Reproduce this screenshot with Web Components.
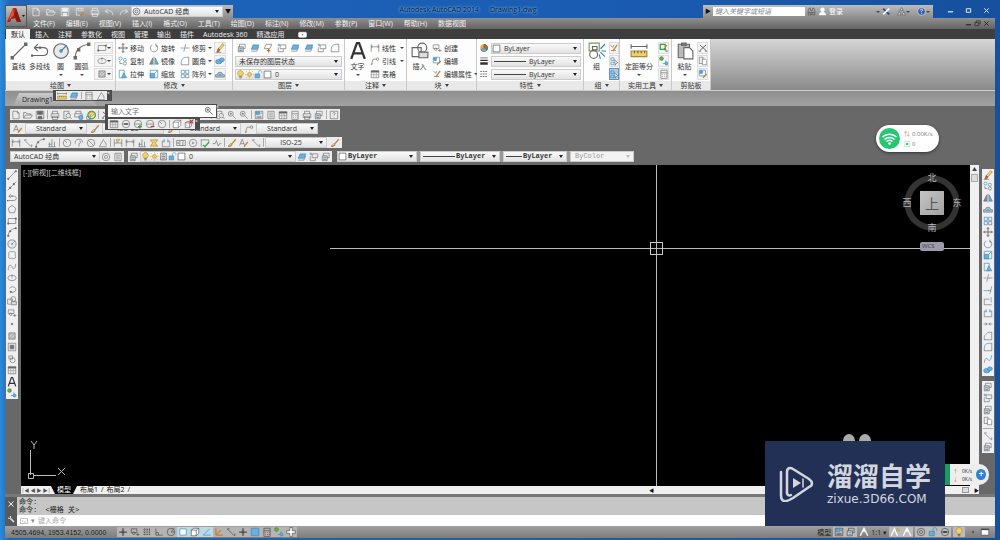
<!DOCTYPE html>
<html lang="zh-CN">
<head>
<meta charset="utf-8">
<title>Autodesk AutoCAD 2014 - Drawing1.dwg</title>
<style>
  body {
    margin: 0;
    height: 100vh;
    overflow: hidden;
    font: 7px/9px "Open Sans", "Noto Sans CJK SC", sans-serif;
    color: #333;
  }
</style>
</head>
<body>
<cad-app></cad-app>

<script>
// every icon is drawn on a 16x16 grid
const ICONS = {
  new: '<path d="M3 2h7l3 3v9H3zM10 2v3h3"/>',
  open: '<path d="M1 13V4h4l1 2h6v2M1 13l3-5h11l-3 5z"/>',
  save: '<path d="M2 2h12v12H2z"/><path fill="currentColor" d="M4 2h8v5H4zM5 10h6v4H5z"/>',
  saveas: '<path d="M2 2h11v6M2 2v11h6M5 2v4h5V2"/><path class="o" d="M9 14l5-6"/>',
  print: '<path d="M4 6V2h8v4M2 6h12v6H2zM4 10h8v5H4z"/>',
  undo: '<path d="M14 13c0-7-5-8-11-6M6 3L2 7l5 3"/>',
  redo: '<path d="M2 13c0-7 5-8 11-6M10 3l4 4-5 3"/>',
  gear: '<circle cx="8" cy="8" r="6"/><circle cx="8" cy="8" r="2.5"/>',
  preview: '<path d="M11 6V2H3v12h5"/><circle cx="10" cy="9" r="3.5"/><path d="M12.500 11.500l3 3"/>',
  publish: '<path d="M3 6V2h8v4M1 6h12v5H1z"/><circle class="bf" cx="11" cy="12" r="3.500"/>',
  globe: '<circle class="g" cx="9" cy="8" r="6"/><path class="yf" d="M9 2l5 4-5 5-4-5z"/><path d="M1 10h6v5H1z"/>',
  line: '<path d="M2 14L14 2"/><path fill="currentColor" d="M1 13h2v2H1zM13 1h2v2h-2z"/>',
  xline: '<path d="M1 15L15 1"/><path fill="currentColor" d="M4 10h2v2H4zM10 4h2v2h-2z"/>',
  pline: '<path d="M1 12h10c5 0 5-7 0-7H3M6 2L3 5l3 3"/><path fill="currentColor" stroke="none" d="M0 11h2v2H0zM7 4h2v2H7z"/>',
  circle: '<circle cx="8" cy="8" r="6.500" fill="#e9e9e9"/><circle class="b" cx="8" cy="8" r="1"/><path class="b" d="M8 8l5-5"/>',
  arc: '<path d="M2 14C2 7 7 3 14 2"/><path fill="currentColor" d="M1 13h2v2H1zM13 1h2v2h-2zM4 6h2v2H4z"/>',
  rect: '<path d="M2 4h12v8H2z"/><path fill="currentColor" d="M1 11h2v2H1zM13 3h2v2h-2z"/>',
  ellipse: '<ellipse cx="8" cy="8" rx="6.500" ry="4"/><path d="M8 7v2M8 2v4"/>',
  hatch: '<path d="M3 3h10v10H3z" fill="#ccc"/><path stroke="#999" d="M3 8l5-5M3 13L13 3M8 13l5-5"/>',
  grad: '<path d="M2 2h12v12H2z"/><path d="M5 5h6v6H5z" fill="#777"/>',
  poly: '<path d="M8 2l6 5-2 7H4L2 7z"/>',
  cloud: '<path d="M4 3c2-2 3 0 4 0s4-2 5 1 0 3 0 4 2 3 0 5-4 0-5 0-4 2-5-1 0-3 0-4-1-4 1-5z"/>',
  spline: '<path d="M2 13c0-12 6-7 6-5s5 7 6-5"/>',
  earc: '<path d="M4 5c5-5 13 0 9 5-2 2-5 2-7 1"/><path fill="currentColor" d="M5 10h2v2H5z"/>',
  insert: '<path d="M1 5h8v8H1z"/><circle cx="10" cy="5" r="4"/><path d="M7 9h8v5H7z" fill="#ddd"/>',
  block: '<path d="M2 3h9v6H2z"/><circle cx="6" cy="10" r="2"/><path d="M10 12h5M12.500 9.500v5"/>',
  point: '<path fill="currentColor" d="M7 7h2v2H7z"/>',
  region: '<path d="M3 3h6v5H3z"/><circle cx="9" cy="10" r="4"/>',
  table: '<path d="M2 3h12v11H2z"/><path fill="currentColor" d="M2 3h12v2H2z"/><path stroke="#999" d="M2 9h12M6 5v9M10 5v9"/>',
  text: '<path d="M2 15L7 1h2l5 14M4 10h8" stroke="#333" stroke-width="2"/>',
  addsel: '<circle class="gf" cx="4" cy="4" r="3"/><path class="b" d="M6 12h5V7"/><circle class="bf" cx="12" cy="12" r="2.500"/>',
  move: '<path d="M8 1v14M1 8h14M6 3l2-2 2 2M6 13l2 2 2-2M3 6L1 8l2 2M13 6l2 2-2 2" stroke-width="1.500"/>',
  copy: '<circle class="b" cx="4" cy="4" r="2.500"/><circle class="b" cx="11" cy="6" r="2.500"/><circle cx="11" cy="12" r="2.500"/><path d="M3 8v4h4"/>',
  stretch: '<path class="b" d="M2 2h8v12H2z"/><path class="bf" d="M9 6l5 8H6z"/>',
  rotate: '<path d="M5 3a6 6 0 1 0 6 0M11 1v4h3"/>',
  mirror: '<path fill="#888" d="M6 3v10H1z"/><path class="bf" d="M10 3v10h5z"/><path d="M8 1v14"/>',
  scale: '<path class="b" d="M2 2h12v12H2z"/><path class="bf" d="M2 7h7v7H2z"/><path class="b" d="M9 7l4-4"/>',
  trim: '<path class="b" d="M1 8h5"/><path d="M8 8h7M9 2L6 14"/>',
  extend: '<path class="b" d="M1 9h8"/><path d="M8 9h5M14 2l-3 12"/>',
  fillet: '<path class="b" d="M2 10c0-5 3-8 8-8"/><path d="M10 2h4v12H2v-4"/>',
  chamfer: '<path class="b" d="M2 8l6-6"/><path d="M8 2h6v12H2V8"/>',
  array: '<path class="b" d="M2 2h5v5H2zM9 2h5v5H9zM2 9h5v5H2z"/><path d="M9 9h5v5H9z"/>',
  erase: '<path class="yf" d="M5 9l7-8 3 2-7 8z"/><path class="rf" d="M5 9l3 2-2 3H3z"/><path d="M1 15h9"/>',
  explode: '<ellipse class="bf" cx="6" cy="9" rx="5" ry="3.500"/><ellipse class="bf" cx="11" cy="6" rx="4" ry="3"/>',
  offset: '<path d="M1 13h14v-4h-3a4 4 0 0 0-8 0H1z" fill="#9bc4e0"/><path d="M6 11a2 2 0 0 1 4 0"/>',
  break: '<path d="M6 5H2v9h12V5h-4"/><path class="b" d="M5 2v5M11 2v5"/>',
  breakpt: '<path d="M10 5H2v9h12"/><path class="b" d="M13 2v8"/>',
  join: '<path d="M1 8h5M15 8h-5M4 6l3 2-3 2M12 6L9 8l3 2"/>',
  blend: '<path d="M2 14c1-8 4-8 6-5"/><path class="b" d="M8 9c2 3 5 1 6-7"/>',
  layer: '<path d="M4 2h9v7H4z"/><path fill="#ccc" d="M2 6h8v8H2z"/><path class="b" d="M4 9h4M4 12h4"/>',
  layerb: '<path class="bf" d="M5 3h9l-3 7H2z"/><path d="M2 13h9l3-7"/>',
  layero: '<path d="M5 2h9l-3 7H2z"/><path class="o" d="M6 12h6M9 9v6"/>',
  layers: '<path d="M5 3h9v6H5zM2 7v7h8v-4"/><path class="b" d="M1 3h4M3 1v4"/>',
  bulb: '<path class="yf" d="M5 10a5 5 0 1 1 6 0v1H5z"/><path d="M6 12h4M6 14h4"/>',
  sun: '<circle class="yf" cx="8" cy="8" r="3.500"/><path class="y" d="M8 0v3M8 13v3M0 8h3M13 8h3M2 2l2 2M12 12l2 2M14 2l-2 2M4 12l-2 2"/>',
  lock: '<path class="bf" d="M2 7h8v7H2z"/><path class="b" d="M8 7V4c0-4 6-4 6 0v2"/>',
  swatch: '<path fill="#fff" d="M2 2h12v12H2z"/>',
  dim: '<path d="M2 2v12M14 2v12M2 6h12M4 4L2 6l2 2M12 4l2 2-2 2"/>',
  dima: '<path d="M2 3l3 3 7 7 2 1M2 3h4M14 14v-4"/>',
  leader: '<path d="M2 14L5 5h5M2 14l3-2"/><circle cx="12" cy="5" r="2"/>',
  dimord: '<path d="M2 14h12M4 14V7M8 14V2M12 14V6"/><path class="b" d="M2 10h6"/>',
  dimrad: '<circle cx="8" cy="8" r="6"/><path d="M8 8L4 4"/>',
  dimjog: '<path d="M2 9a6 6 0 0 1 12-2M8 14V9l3-2-2-3"/>',
  dimdia: '<circle cx="8" cy="8" r="6"/><path d="M4 4l8 8"/>',
  dimang: '<path d="M2 14L9 2M2 14h12M9 4c3 2 4 5 4 8"/>',
  quick: '<path d="M2 2v12M14 2v12M2 8h12"/><path class="yf" d="M5 2h6L7 8z"/>',
  tol: '<path d="M1 4h14v8H1zM6 4v8M11 4v8"/><circle cx="3.500" cy="8" r="1"/>',
  center: '<circle cx="8" cy="8" r="6"/><path d="M8 6v4M6 8h4"/>',
  check: '<path d="M2 2v12M2 3h12v6"/><path class="g" d="M5 11l3 3 6-7"/>',
  jog: '<path d="M1 9h4l2-5 3 9 2-4h3"/>',
  space: '<path class="yf" d="M2 3h12l-4 5 4 5H2l4-5z"/>',
  brush: '<path class="o" d="M2 13c3 1 6-1 6-4l6-7"/><path d="M2 13l5-5"/>',
  styleA: '<path d="M1 12L5 2l4 10M3 9h5"/><path class="o" d="M8 14l6-8"/>',
  color: '<circle cx="8" cy="8" r="6" fill="#ddb02f" stroke="none"/><path class="rf" d="M8 8V2a6 6 0 0 1 5 9z"/><path class="bf" d="M8 8l5 3a6 6 0 0 1-10 0z"/>',
  weight: '<path d="M2 3h12" stroke-width="1"/><path d="M2 7h12" stroke-width="2"/><path d="M2 12h12" stroke-width="4"/>',
  ltype: '<path stroke-dasharray="3 1" d="M2 4h12M2 8h12M2 12h12"/>',
  group: '<path stroke="#7a9a55" d="M1 1h9v7H1z"/><circle cx="5" cy="11" r="3.500"/><path d="M4 4h4v3H4z"/><path class="b" d="M11 6l4-4M12 8h4M11 9l4 4M10 11l1 4"/>',
  ungroup: '<path d="M2 3l4 4 2-4M3 12h8"/><path class="o" d="M6 13l7-10"/>',
  groupsel: '<path class="b" d="M3 3h5v4H3zM3 10h5v4H3z"/><path fill="#fff" d="M9 6l5 5-3 1-1 3z"/>',
  measure: '<path d="M1 2v4M15 2v4M1 4h14"/><path class="yf" d="M1 8h14v5H1z"/><path d="M4 8v2M7 8v2M10 8v2M13 8v2"/>',
  calc: '<path d="M3 2h10v13H3zM3 6h10"/><path stroke-dasharray="1 2" d="M5 9h7M5 12h7"/>',
  qselect: '<path class="g" d="M2 2h8v8H2z"/><path class="o" d="M9 3l4 2"/><path d="M8 8l6 5-3 1z"/>',
  paste: '<path fill="#bbb" d="M2 2h10v12H2z"/><path fill="#888" d="M5 1h4v2H5z"/><path fill="#fff" d="M7 5h5l3 3v7H7z"/>',
  cut: '<path d="M3 3l10 9M13 3L3 12M1 13h4M11 13h4" stroke-width="1.500"/>',
  pages: '<path d="M2 2h6v10H2z"/><path fill="#fff" d="M7 5h5l2 2v7H7z"/>',
  match: '<path class="b" d="M2 2h10v9H2z"/><path class="bf" d="M3 3h4v4H3z"/><path class="o" d="M8 14l6-6"/>',
  pan: '<path d="M4 2l3 5M8 2v5M5 14L2 8l3 1h7l-2 5z"/><circle cx="12" cy="6" r="2"/>',
  zoom: '<circle cx="6" cy="6" r="4"/><path d="M9 9l5 5M6 4v4M4 6h4"/>',
  props: '<path d="M2 2h12v12H2z"/><path class="bf" d="M3 3h6v4H3z"/><path d="M10 5h3M4 10h8M4 12h8"/>',
  sheet: '<path d="M3 2h10v12H3zM5 5h6M5 8h6M5 11h6"/>',
  cube: '<path fill="#fff" d="M2 5l4-3h8v8l-4 4H2zM2 5h8v9M10 5l4-3"/>',
  cubex: '<path d="M2 6l3-2h7v7l-3 3H2zM2 6h7v8"/><path class="r" d="M9 1l6 6M15 1L9 7"/>',
  ball: '<circle cx="8" cy="8" r="6"/><path d="M2 8h12"/><path d="M5 8h6" stroke-width="3"/>',
  ballg: '<circle cx="8" cy="8" r="6"/><path d="M2 8h12"/><path class="g" d="M8 12h6M11 9v6"/>',
  ballr: '<circle cx="8" cy="8" r="6"/><path d="M2 8h12"/><path class="r" d="M9 12h6"/>',
  help: '<circle cx="8" cy="8" r="7" fill="#3c62a8" stroke="#fff"/><path stroke="#fff" stroke-width="1.500" d="M6 6c0-3 5-2 4 0-1 1-2 1-2 3M8 11v1.500"/>',
  helpbox: '<path d="M2 2h12v12H2z"/><path d="M6 6c0-3 5-2 4 0-1 1-2 1-2 3M8 11v1"/>',
  binoc: '<path d="M2 14V7l2-5h2v4h4V2h2l2 5v7h-5V9H7v5z"/><path d="M2 10h5M9 10h5"/>',
  user: '<circle cx="8" cy="5" r="3.500" fill="#fff"/><path fill="#fff" d="M2 14c1-7 11-7 12 0z"/>',
  exchange: '<path stroke="#2d3fa0" stroke-width="3" d="M2 3l11 10"/><path stroke="#fff" stroke-width="3" d="M2 13L13 3"/>',
  tri: '<path fill="#dde" d="M8 1l3 5H5zM4 8l3 6H1zM12 8l3 6H9z"/>',
  grid: '<path stroke-dasharray="2 1" d="M2 4h12M2 8h12M2 12h12M4 2v12M8 2v12M12 2v12"/>',
  ortho: '<path d="M3 2v11h11M3 9h4v4"/>',
  polar: '<circle cx="8" cy="8" r="6"/><path d="M8 8h6M8 8l5-6"/>',
  osnap: '<path class="b" fill="#fff" d="M3 3h10v10H3z"/>',
  track: '<path class="b" d="M2 13h12M2 13L12 3"/>',
  ucs: '<path class="o" d="M3 13V2M3 13h11M3 13l8-8"/>',
  plus: '<path d="M8 2v12M2 8h12" stroke-width="2"/>',
  cross: '<path fill="#fff" d="M6 1h4v5h5v4h-5v5H6v-5H1V6h5z"/>',
  fullbox: '<path class="bf" d="M2 2h12v12H2z"/>',
  wrench: '<path stroke-width="3" d="M14 14L7 7"/><path stroke-width="2" d="M7 2v4L5 7 2 6"/>',
  close: '<path stroke-width="2" d="M3 3l10 10M13 3L3 13"/>',
  min: '<path stroke-width="2.500" d="M2 11h12"/>',
  max: '<path stroke-width="2" d="M3 4h10v8H3z"/>',
  window: '<path fill="#fff" d="M2 3h12v10H2z"/><path stroke-width="2" d="M2 4h12"/>',
  restore: '<path stroke-width="1.500" d="M5 6V2h9v7h-3M2 6h9v7H2z"/>',
  camera: '<rect x="1" y="4" width="14" height="9" rx="2" fill="currentColor"/><circle cx="8" cy="8.500" r="1.500" fill="#333"/>',
  prompt: '<path d="M1 3h14v10H1zM4 6l2 2-2 2M8 10h4"/>',
  anno: '<path stroke="#fff" stroke-width="2" d="M2 14L8 2l6 12M8 2v6"/>',
  annoy: '<path stroke="#fff" stroke-width="2" d="M2 14L7 3l5 11"/><path class="yf" d="M12 2l3 4h-5z"/>'
};

class CadIcon extends HTMLElement {
  constructor() {
    super();
    this.shadowDOM = this.attachShadow({ mode: 'open' });
  }

  connectedCallback() {
    this.shadowDOM.innerHTML = `
      <style>
        :host { display: block; flex: none; width: var(--icon, 10px); height: var(--icon, 10px); }
        svg { display: block; width: 100%; height: 100%; fill: none; stroke: currentColor; }
        .b { stroke: #3185b8; }
        .g { stroke: #35a035; stroke-width: 2; }
        .r { stroke: #c93434; stroke-width: 2; }
        .o { stroke: #c77f2c; stroke-width: 2; }
        .y { stroke: #d1a52d; }
        .bf { fill: #69b0df; stroke: #3185b8; }
        .gf { fill: #6cae4c; stroke: #35803a; }
        .yf { fill: #f0d068; stroke: #a8883a; }
        .rf { fill: #c45f36; stroke: #8c4a2a; }
      </style>
      <svg viewBox="0 0 16 16" aria-hidden="true">${ICONS[this.getAttribute('name')] || ''}</svg>
    `;
  }
}
customElements.define('cad-icon', CadIcon);

// button with an icon; "kind" is big (label below), row (label beside) or nothing (icon only)
class CadTool extends HTMLElement {
  constructor() {
    super();
    this.shadowDOM = this.attachShadow({ mode: 'open' });
  }

  connectedCallback() {
    const icon = this.getAttribute('icon');
    const label = this.getAttribute('label');
    this.shadowDOM.innerHTML = `
      <style>
        :host { display: flex; min-width: 0; align-items: stretch; }
        button {
          flex: 1; display: flex; align-items: center; justify-content: center;
          margin: 0; padding: 0; border: 0; background: none; color: inherit;
          font: inherit; white-space: nowrap; cursor: pointer;
        }
        button:hover { background: #cfe4f7; }
        cad-icon { color: var(--ink, inherit); }
        i { border: 2px solid transparent; border-top-color: #444; border-bottom: 0; }
        :host([kind=row]) button { justify-content: flex-start; gap: 2px; }
        :host([kind=row]) i { margin-left: auto; }
        :host([kind=big]) { --icon: 18px; }
        :host([kind=big]) button { flex-direction: column; justify-content: flex-start; }
        :host([kind=big]) span { margin: 3px 0; line-height: 8px; }
        :host([active]) button { background: #a9cdec; outline: 1px solid #5f93c0; outline-offset: -1px; }
        :host([boxed]) button { background: #f4f4f4; outline: 1px solid #ddd; outline-offset: -1px; }
      </style>
      <button type="button" aria-label="${label || icon}">
        <cad-icon name="${icon}"></cad-icon>
        ${label ? `<span>${label}</span>` : ''}
        ${this.hasAttribute('drop') ? '<i></i>' : ''}
      </button>
    `;
  }
}
customElements.define('cad-tool', CadTool);

// icons="new open | print": a run of icon buttons, "|" is a separator
class CadStrip extends HTMLElement {
  constructor() {
    super();
    this.shadowDOM = this.attachShadow({ mode: 'open' });
  }

  connectedCallback() {
    const items = this.getAttribute('icons').split(' ').map((name) => (
      name === '|' ? '<hr>' : `<cad-tool icon="${name}"></cad-tool>`
    )).join('');
    this.shadowDOM.innerHTML = `
      <style>
        :host { display: flex; color: #666; }
        cad-tool { flex: 0 0 auto; width: var(--cell, 12px); }
        hr { flex: none; width: 1px; margin: 1px; border: 0; background: #aaa; }
        :host([vertical]) { flex-direction: column; }
        :host([vertical]) cad-tool { flex: 1; width: auto; }
        :host([vertical]) hr { width: auto; height: 1px; }
        :host([fill]) cad-tool { flex: 1; }
      </style>
      ${items}
    `;
  }
}
customElements.define('cad-strip', CadStrip);

class CadSelect extends HTMLElement {
  constructor() {
    super();
    this.shadowDOM = this.attachShadow({ mode: 'open' });
  }

  connectedCallback() {
    this.shadowDOM.innerHTML = `
      <style>
        :host {
          display: flex; align-items: center; box-sizing: border-box; min-width: 0;
          border: 1px solid #ccc; background: linear-gradient(#fafafa, #e2e2e2); color: #333;
          --icon: 9px;
        }
        select {
          flex: 1; min-width: 0; height: 9px; margin: 0; padding: 0 var(--pad, 3px); border: 0; border-radius: 0;
          appearance: none; background: none; color: inherit; font: inherit; opacity: 1;
        }
        i { margin: 0 3px; border: 2px solid transparent; border-top: 3px solid #222; border-bottom: 0; }
        :host([center]) select { text-align: center; text-align-last: center; }
        :host([disabled]) { background: #f3f3f3; color: #999; }
        :host([disabled]) i { border-top-color: #bbb; }
        ::slotted(hr) { flex: 0 0 var(--rule, 32px); height: 1px; border: 0; margin: 0 0 0 2px; background: #444; }
      </style>
      <slot></slot>
      <select aria-label="${this.getAttribute('label')}" ${this.hasAttribute('disabled') ? 'disabled' : ''}>
        <option>${this.getAttribute('value')}</option>
      </select>
      <i></i>
    `;
  }
}
customElements.define('cad-select', CadSelect);

class CadHeader extends HTMLElement {
  constructor() {
    super();
    this.shadowDOM = this.attachShadow({ mode: 'open' });
  }

  connectedCallback() {
    const menus = ['文件(F)', '编辑(E)', '视图(V)', '插入(I)', '格式(O)', '工具(T)', '绘图(D)',
      '标注(N)', '修改(M)', '参数(P)', '窗口(W)', '帮助(H)', '数据视图'];
    this.shadowDOM.innerHTML = `
      <style>
        :host { display: block; position: relative; }
        .title { display: flex; height: 13px; padding-left: 22px; }
        .quick, .search { display: flex; align-items: center; background: linear-gradient(#bdbdbd, #8d8d8d); color: #444; }
        .quick { padding-left: 2px; }
        .quick cad-strip { --icon: 10px; color: #f4f4f4; width: 102px; }
        .quick cad-select { width: 92px; height: 11px; }
        .quick b { padding: 0 2px; font-size: 6px; color: #111; }
        h1 { flex: 1; margin: 0; font: inherit; line-height: 10px; text-align: center; white-space: pre; color: #061c3c; text-shadow: 0 0 3px #8fc0ef, 0 0 3px #6ba6e0; }
        .search { --icon: 9px; }
        .search b { padding: 0 2px; font-size: 6px; color: #111; }
        input { width: 92px; height: 9px; padding: 0 2px; margin: 0; border: 0; box-sizing: border-box; background: #fff; font: italic 7px/9px "Open Sans", "Noto Sans CJK SC", sans-serif; }
        input::placeholder { color: #888; }
        .search cad-tool { width: 13px; }
        .search cad-tool[label] { color: #fff; width: 62px; }
        .search cad-tool.wide { width: 20px; }
        .window { display: flex; width: 54px; margin: 0 0 3px 8px; color: #fff; --icon: 7px; }
        .window cad-tool { flex: 1; }
        .menu { display: flex; align-items: center; gap: 11px; height: 11px; padding: 0 4px 0 28px; color: #f2f2f2; background: linear-gradient(#8f8f8f, #636363); }
        .menu a { color: inherit; text-decoration: none; white-space: nowrap; }
        .menu cad-strip { margin-left: auto; --cell: 9px; --icon: 7px; color: #222; }
        .logo { position: absolute; left: 0; top: 0; width: 22px; height: 22px; padding: 0; border: 1px solid #555; background: linear-gradient(#c4c4c4, #777); }
        .logo svg { display: block; width: 100%; height: 100%; }
      </style>
      <div class="title">
        <div class="quick">
          <cad-strip icons="new open save saveas print undo redo" fill></cad-strip>
          <cad-select label="工作空间" value="AutoCAD 经典"><cad-icon name="gear"></cad-icon></cad-select>
          <b>▼</b>
        </div>
        <h1>Autodesk AutoCAD 2014      Drawing1.dwg</h1>
        <div class="search">
          <b>▶</b>
          <input type="search" aria-label="搜索" placeholder="键入关键字或短语">
          <cad-tool icon="binoc"></cad-tool>
          <cad-tool icon="user" kind="row" label="登录" drop></cad-tool>
          <cad-tool icon="exchange"></cad-tool>
          <cad-tool class="wide" icon="tri" drop></cad-tool>
          <cad-tool class="wide" icon="help" drop></cad-tool>
        </div>
        <div class="window">
          <cad-tool icon="min"></cad-tool><cad-tool icon="max"></cad-tool><cad-tool icon="close"></cad-tool>
        </div>
      </div>
      <nav class="menu">
        ${menus.map((m) => `<a href="#">${m}</a>`).join('')}
        <cad-strip icons="min restore close"></cad-strip>
      </nav>
      <button class="logo" aria-label="应用程序菜单">
        <svg viewBox="0 0 20 20">
          <path d="M1 16L7 2h3l5 14h-4l-2-4-4 1-1 3z" fill="#c4281c"/>
          <path d="M10 2l5 14h-4L8 9z" fill="#8a1710"/>
          <path d="M1 16l7-7 1 3-4 1-1 3z" fill="#a31d14"/>
          <path d="M7 2l1 7-5 5z" fill="#e2533a"/>
          <path d="M16 9h3l-1.500 2z" fill="#111"/>
        </svg>
      </button>
    `;
  }
}
customElements.define('cad-header', CadHeader);

class RibbonPanel extends HTMLElement {
  constructor() {
    super();
    this.shadowDOM = this.attachShadow({ mode: 'open' });
  }

  connectedCallback() {
    const arrow = this.hasAttribute('plain') ? '' : '<i></i>';
    this.shadowDOM.innerHTML = `
      <style>
        :host { display: flex; flex-direction: column; box-sizing: border-box; border-right: 1px solid #c8c8c8; background: #fdfdfd; }
        .body { display: flex; height: 38px; padding: 3px 2px 1px; gap: 2px; }
        .name { display: flex; align-items: center; justify-content: center; gap: 3px; height: 9px; background: #e9e9e9; white-space: nowrap; }
        i { border: 2px solid transparent; border-top: 3px solid #444; border-bottom: 0; }
      </style>
      <div class="body"><slot></slot></div>
      <div class="name">${this.getAttribute('name')} ${arrow}</div>
    `;
  }
}
customElements.define('ribbon-panel', RibbonPanel);

class CadRibbon extends HTMLElement {
  constructor() {
    super();
    this.shadowDOM = this.attachShadow({ mode: 'open' });
  }

  connectedCallback() {
    const tabs = ['默认', '插入', '注释', '参数化', '视图', '管理', '输出', '插件', 'Autodesk 360', '精选应用'];
    this.shadowDOM.innerHTML = `
      <style>
        :host { display: block; }
        .tabs { display: flex; gap: 1px; height: 10px; padding-left: 1px; background: #3e3e3e; }
        .tabs button { padding: 0 4px; border: 0; background: none; color: #eee; font: inherit; white-space: nowrap; }
        .tabs button.on { padding: 0 5px; background: #f4f4f4; color: #222; }
        .tabs cad-tool { width: 22px; margin-left: 4px; color: #fff; --icon: 9px; }
        .panels { display: flex; padding-left: 1px; background: linear-gradient(#d6d6d6, #8a8a8a); border-bottom: 1px solid #ccc; }
        ribbon-panel { flex: 0 0 auto; --ink: #666; }
        .big { display: flex; }
        .big cad-tool { width: 21px; }
        .big .wider { width: 34px; }
        .col { display: grid; grid-template-rows: repeat(3, 12px); gap: 1px; flex: 1; }
        .three { grid-template-columns: 28px 28px 31px 12px; column-gap: 3px; }
        .line { display: flex; align-items: center; gap: 2px; }
        .line cad-strip { flex: 1; }
        .line cad-select { flex: 1; }
        .draw { width: 110px; }
        .modify { width: 117px; }
        .layers { width: 112px; }
        .note { width: 62px; }
        .blocks { width: 70px; }
        .props { width: 107px; }
        .groups { width: 36px; }
        .utils { width: 52px; }
        .clip { width: 39px; }
      </style>
      <div class="tabs" role="tablist">
        ${tabs.map((t, i) => `<button role="tab" class="${i ? '' : 'on'}">${t}</button>`).join('')}
        <cad-tool icon="camera" drop></cad-tool>
      </div>
      <div class="panels">
        <ribbon-panel class="draw" name="绘图">
          <div class="big">
            <cad-tool kind="big" icon="line" label="直线"></cad-tool>
            <cad-tool kind="big" icon="pline" label="多段线"></cad-tool>
            <cad-tool kind="big" icon="circle" label="圆" drop></cad-tool>
            <cad-tool kind="big" icon="arc" label="圆弧" drop></cad-tool>
          </div>
          <div class="col">
            <cad-tool icon="rect" boxed drop></cad-tool>
            <cad-tool icon="ellipse" boxed drop></cad-tool>
            <cad-tool icon="hatch" boxed drop></cad-tool>
          </div>
        </ribbon-panel>
        <ribbon-panel class="modify" name="修改">
          <div class="col three">
            <cad-tool kind="row" icon="move" label="移动"></cad-tool>
            <cad-tool kind="row" icon="rotate" label="旋转"></cad-tool>
            <cad-tool kind="row" icon="trim" label="修剪" drop></cad-tool>
            <cad-tool icon="erase" boxed></cad-tool>
            <cad-tool kind="row" icon="copy" label="复制"></cad-tool>
            <cad-tool kind="row" icon="mirror" label="镜像"></cad-tool>
            <cad-tool kind="row" icon="fillet" label="圆角" drop></cad-tool>
            <cad-tool icon="explode" boxed></cad-tool>
            <cad-tool kind="row" icon="stretch" label="拉伸"></cad-tool>
            <cad-tool kind="row" icon="scale" label="缩放"></cad-tool>
            <cad-tool kind="row" icon="array" label="阵列" drop></cad-tool>
            <cad-tool icon="offset" boxed></cad-tool>
          </div>
        </ribbon-panel>
        <ribbon-panel class="layers" name="图层">
          <div class="col">
            <div class="line"><cad-strip fill icons="layer layerb layero layers layerb layerb layers fillet"></cad-strip></div>
            <div class="line"><cad-select label="图层状态" value="未保存的图层状态"></cad-select></div>
            <div class="line"><cad-select label="图层" value="0">
              <cad-icon name="bulb"></cad-icon><cad-icon name="sun"></cad-icon><cad-icon name="lock"></cad-icon><cad-icon name="swatch"></cad-icon>
            </cad-select></div>
          </div>
        </ribbon-panel>
        <ribbon-panel class="note" name="注释">
          <div class="big"><cad-tool kind="big" icon="text" label="文字" drop></cad-tool></div>
          <div class="col">
            <cad-tool kind="row" icon="dim" label="线性" drop></cad-tool>
            <cad-tool kind="row" icon="leader" label="引线" drop></cad-tool>
            <cad-tool kind="row" icon="table" label="表格"></cad-tool>
          </div>
        </ribbon-panel>
        <ribbon-panel class="blocks" name="块">
          <div class="big"><cad-tool kind="big" icon="insert" label="插入"></cad-tool></div>
          <div class="col">
            <cad-tool kind="row" icon="block" label="创建"></cad-tool>
            <cad-tool kind="row" icon="match" label="编辑"></cad-tool>
            <cad-tool kind="row" icon="ungroup" label="编辑属性" drop></cad-tool>
          </div>
        </ribbon-panel>
        <ribbon-panel class="props" name="特性">
          <div class="col">
            <div class="line"><cad-icon name="color"></cad-icon><cad-select label="颜色" value="ByLayer"><cad-icon name="swatch"></cad-icon></cad-select></div>
            <div class="line"><cad-icon name="weight"></cad-icon><cad-select label="线宽" value="ByLayer"><hr></cad-select></div>
            <div class="line"><cad-icon name="ltype"></cad-icon><cad-select label="线型" value="ByLayer"><hr></cad-select></div>
          </div>
        </ribbon-panel>
        <ribbon-panel class="groups" name="组">
          <div class="big"><cad-tool kind="big" icon="group" label="组"></cad-tool></div>
          <div class="col">
            <cad-tool icon="ungroup" boxed></cad-tool>
            <cad-tool icon="groupsel" boxed></cad-tool>
            <cad-tool icon="groupsel" active></cad-tool>
          </div>
        </ribbon-panel>
        <ribbon-panel class="utils" name="实用工具">
          <div class="big"><cad-tool class="wider" kind="big" icon="measure" label="定距等分" drop></cad-tool></div>
          <div class="col">
            <cad-tool icon="qselect" boxed></cad-tool>
            <cad-tool icon="addsel" boxed></cad-tool>
            <cad-tool icon="calc" boxed></cad-tool>
          </div>
        </ribbon-panel>
        <ribbon-panel class="clip" name="剪贴板" plain>
          <div class="big"><cad-tool kind="big" icon="paste" label="粘贴" drop></cad-tool></div>
          <div class="col">
            <cad-tool icon="cut" boxed></cad-tool>
            <cad-tool icon="pages" boxed></cad-tool>
            <cad-tool icon="match" boxed></cad-tool>
          </div>
        </ribbon-panel>
      </div>
    `;
  }
}
customElements.define('cad-ribbon', CadRibbon);

class CadToolbars extends HTMLElement {
  constructor() {
    super();
    this.shadowDOM = this.attachShadow({ mode: 'open' });
  }

  connectedCallback() {
    this.shadowDOM.innerHTML = `
      <style>
        :host { display: block; }
        .docs { height: 15px; background: linear-gradient(#8f8f8f, #a2a2a2); display: flex; align-items: flex-end; padding-left: 8px; }
        .docs button { width: 84px; height: 13px; padding: 0 9px; border: 0; text-align: left; font: inherit; color: #222; background: linear-gradient(#c9c9c9, #a6a6a6); clip-path: polygon(6px 0, 78px 0, 100% 100%, 0 100%); }
        .rows { display: flex; flex-direction: column; gap: 3px; padding: 3px 5px; background: #686868; }
        .row { display: flex; gap: 4px; }
        .bar { display: flex; height: 11px; background: #ececec; }
        .bar cad-select { width: 62px; }
        .bar cad-tool { width: 15px; color: #666; }
        .bar .wide { width: 90px; }
        .bar .layer { width: 156px; }
        .bar .mono { width: 80px; --pad: 1px; font-family: "Liberation Mono", monospace; font-weight: bold; }
        .bar .mono.short { width: 64px; --rule: 16px; }
        .bar .mono[disabled] { --pad: 4px; font-weight: normal; }
        .props { gap: 3px; margin-left: 1px; background: #999; }
      </style>
      <div class="docs"><button type="button">Drawing1*</button></div>
      <div class="rows">
        <div class="row"><div class="bar">
          <cad-strip icons="new open save | print preview publish globe | cut pages paste match block | undo redo | pan zoom preview zoom zoom | props sheet table calc print layer | helpbox"></cad-strip>
        </div></div>
        <div class="row"><div class="bar">
          <cad-tool icon="styleA"></cad-tool><cad-select label="文字样式" value="Standard" center></cad-select>
          <cad-tool icon="brush"></cad-tool><cad-select label="标注样式" value="ISO-25" center></cad-select>
          <cad-tool icon="brush"></cad-tool><cad-select label="表格样式" value="Standard" center></cad-select>
          <cad-tool icon="leader"></cad-tool><cad-select label="多重引线样式" value="Standard" center></cad-select>
        </div></div>
        <div class="row"><div class="bar">
          <cad-strip icons="dim dima arc dimord | dimrad dimjog dimdia dimang | quick dim dimord space break | tol center check jog | brush styleA dima |"></cad-strip>
          <cad-select label="标注样式" value="ISO-25" center></cad-select>
          <cad-tool icon="brush"></cad-tool>
        </div></div>
        <div class="row">
          <div class="bar">
            <cad-select class="wide" label="工作空间" value="AutoCAD 经典"></cad-select>
            <cad-strip icons="gear sheet"></cad-strip>
          </div>
          <div class="bar">
            <cad-strip icons="layer"></cad-strip>
            <cad-select class="layer" label="图层" value="0">
              <cad-icon name="bulb"></cad-icon><cad-icon name="sun"></cad-icon><cad-icon name="sheet"></cad-icon><cad-icon name="lock"></cad-icon><cad-icon name="swatch"></cad-icon>
            </cad-select>
            <cad-strip icons="layerb layers layer"></cad-strip>
          </div>
          <div class="bar props">
            <cad-select class="mono" label="颜色控制" value="ByLayer"><cad-icon name="swatch"></cad-icon></cad-select>
            <cad-select class="mono" label="线型控制" value="ByLayer"><hr></cad-select>
            <cad-select class="mono short" label="线宽控制" value="ByLayer"><hr></cad-select>
            <cad-select class="mono short" label="打印样式控制" value="ByColor" disabled></cad-select>
          </div>
        </div>
      </div>
    `;
  }
}
customElements.define('cad-toolbars', CadToolbars);

class ViewCube extends HTMLElement {
  constructor() {
    super();
    this.shadowDOM = this.attachShadow({ mode: 'open' });
  }

  connectedCallback() {
    this.shadowDOM.innerHTML = `
      <style>
        :host { display: grid; grid-template: ". n ." 12px "w c e" 38px ". s ." 12px / 12px 38px 12px; place-items: center; color: #b5b5b5; font-size: 9px; line-height: 10px;
          background: radial-gradient(circle, transparent 21px, #333 22px, #333 27px, transparent 28px); }
        .n { grid-area: n; }
        .w { grid-area: w; }
        .e { grid-area: e; }
        .s { grid-area: s; }
        button { grid-area: c; width: 24px; height: 24px; padding: 0; border: 0; background: linear-gradient(135deg, #c4c4c4, #a2a2a2); color: #555; font: 14px/24px "Noto Sans CJK SC", sans-serif; }
      </style>
      <span class="n">北</span>
      <span class="w">西</span><button type="button">上</button><span class="e">东</span>
      <span class="s">南</span>
    `;
  }
}
customElements.define('view-cube', ViewCube);

class CadWorkspace extends HTMLElement {
  constructor() {
    super();
    this.shadowDOM = this.attachShadow({ mode: 'open' });
  }

  connectedCallback() {
    this.shadowDOM.innerHTML = `
      <style>
        :host { display: flex; background: #686868; min-height: 0; }
        .side { display: flex; flex-direction: column; gap: 5px; padding: 4px 3px 0 1px; width: 12px; }
        .side.right { padding: 4px 1px 0 3px; }
        .side cad-strip { background: #f0f0f2; }
        .draw { height: 230px; }
        .edit { height: 207px; }
        .order { height: 72px; }
        .view { flex: 1; display: flex; flex-direction: column; min-width: 0; }
        .top { flex: 1; display: flex; min-height: 0; }
        .canvas { flex: 1; position: relative; overflow: hidden; background: #000; color: #ccc; }
        .canvas p { margin: 3px 2px; }
        .cross { position: absolute; left: 309px; right: 0; top: 0; bottom: 0; }
        .cross::before { content: ""; position: absolute; left: 0; right: 0; top: 83px; height: 1px; background: #bbb; }
        .cross::after { content: ""; position: absolute; left: 326px; top: 0; bottom: 0; width: 1px; background: #bbb; }
        .pick { position: absolute; left: 320px; top: 77px; width: 11px; height: 11px; border: 1px solid #ccc; }
        .ucs { position: absolute; left: 4px; bottom: 2px; width: 44px; height: 44px; fill: none; stroke: #bbb; }
        view-cube { position: absolute; right: 7px; top: 7px; }
        .wcs { position: absolute; right: 26px; top: 77px; width: 24px; height: 9px; padding: 0 2px; box-sizing: border-box; border: 0; border-radius: 2px; background: #9b99ab; color: #444; font: 6px/9px "Open Sans", sans-serif; text-align: left; }
        .scroll { width: 9px; background: #f0f0f0; text-align: center; color: #444; font-size: 5px; }
        .scroll::after { content: ""; display: block; height: 8px; margin: 0 1px; border: 1px solid #aaa; box-sizing: border-box; background: #ddd; }
        .sheets { display: flex; height: 8px; line-height: 8px; background: #f0f0f0; color: #111; }
        .sheets .nav { width: 30px; display: flex; justify-content: space-around; font-size: 5px; color: #555; }
        .sheets button { padding: 0 3px; border: 0; background: none; color: inherit; font: inherit; line-height: 8px; }
        .sheets button.on { padding: 0 6px; background: #000; color: #fff; clip-path: polygon(0 0, 100% 0, 22px 100%, 4px 100%); }
        .hscroll { width: 330px; margin-left: auto; display: flex; justify-content: space-between; font-size: 5px; }
        .hscroll b { width: 7px; height: 6px; margin: 1px 5px 0 auto; background: #ddd; border: 1px solid #999; box-sizing: border-box; }
      </style>
      <div class="side">
        <cad-strip class="draw" vertical icons="line xline pline poly rect arc circle cloud spline ellipse earc insert block point hatch grad region table text addsel"></cad-strip>
      </div>
      <div class="view">
        <div class="top">
          <div class="canvas">
            <p>[-][俯视][二维线框]</p>
            <div class="cross"><div class="pick"></div></div>
            <svg class="ucs" viewBox="0 0 44 44"><path d="M5.500 35V10M9 35.500h22M3.500 33.500h5v5h-5zM6 1l3 4 3-4M9 5v4M33 28l7 7M40 28l-7 7"/></svg>
            <view-cube></view-cube>
            <button class="wcs" type="button">WCS</button>
          </div>
          <div class="scroll">▲</div>
        </div>
        <div class="sheets">
          <span class="nav"><span>|◀</span><span>◀</span><span>▶</span><span>▶|</span></span>
          <button class="on" type="button">模型</button>
          <button type="button">布局1</button>/<button type="button">布局2</button>/
          <span class="hscroll"><span>◀</span><b></b><span>▶</span></span>
        </div>
      </div>
      <div class="side right">
        <cad-strip class="edit" vertical icons="erase copy mirror offset array move rotate scale stretch trim extend breakpt break join chamfer fillet blend explode"></cad-strip>
        <cad-strip class="order" vertical icons="layer layers layer pages | dima layer"></cad-strip>
      </div>
    `;
  }
}
customElements.define('cad-workspace', CadWorkspace);

class CadFooter extends HTMLElement {
  constructor() {
    super();
    this.shadowDOM = this.attachShadow({ mode: 'open' });
  }

  connectedCallback() {
    this.shadowDOM.innerHTML = `
      <style>
        :host { display: block; border-top: 3px solid #777; }
        .command { display: flex; background: #c6c6c6; }
        .grip { display: flex; flex-direction: column; justify-content: space-around; width: 12px; background: #5a5a5a; color: #eee; --icon: 8px; }
        .lines { flex: 1; }
        pre { margin: 0; padding: 1px 2px 0; height: 17px; line-height: 8px; color: #222; font-family: "Liberation Mono", "Noto Sans CJK SC", monospace; }
        label { display: flex; align-items: center; gap: 3px; height: 11px; padding-left: 3px; background: #fff; color: #888; --icon: 8px; }
        input { flex: 1; padding: 0; border: 0; background: none; font: inherit; height: 10px; }
        input::placeholder { color: #aaa; }
        .status { display: flex; align-items: center; height: 12px; padding: 0 4px 0 6px; color: #222; background: linear-gradient(#a0a0a0, #7c7c7c); }
        .coords { width: 106px; font-family: "Liberation Sans", sans-serif; white-space: nowrap; }
        .status cad-strip { --cell: 12px; color: #444; }
        .modes { background: #b4b4b4; }
        .snap { background: #b9dbe8; }
        .right { display: flex; align-items: center; margin-left: auto; gap: 2px; }
        .right .b { background: #bbb; }
      </style>
      <div class="command">
        <div class="grip"><cad-tool icon="close"></cad-tool><cad-tool icon="wrench"></cad-tool></div>
        <div class="lines">
<pre>命令:
命令:  &lt;栅格 关&gt;</pre>
          <label><cad-icon name="prompt"></cad-icon>▾<input type="text" aria-label="命令" placeholder="键入命令"></label>
        </div>
      </div>
      <div class="status">
        <span class="coords">4505.4694, 1953.4152, 0.0000</span>
        <cad-strip class="modes" icons="plus block grid ortho polar"></cad-strip>
        <cad-strip class="snap" icons="osnap cube track"></cad-strip>
        <cad-strip class="modes" icons="ucs dima plus fullbox calc addsel cross"></cad-strip>
        <div class="right">
          <span>模型</span>
          <cad-strip class="b" icons="props layer"></cad-strip>
          <cad-icon name="anno"></cad-icon><span>1:1 ▾</span>
          <cad-strip class="b" icons="annoy anno"></cad-strip>
          <cad-strip class="b" icons="gear lock ball"></cad-strip>
          <cad-strip class="b" icons="bulb"></cad-strip>
          <cad-strip icons="point window"></cad-strip>
        </div>
      </div>
    `;
  }
}
customElements.define('cad-footer', CadFooter);

// dark-framed palette that floats over the toolbars
class FloatBar extends HTMLElement {
  constructor() {
    super();
    this.shadowDOM = this.attachShadow({ mode: 'open' });
  }

  connectedCallback() {
    this.shadowDOM.innerHTML = `
      <style>
        :host { display: flex; padding: 1px 1px 1px 3px; background: #4c4c4c; }
        .in { display: flex; flex: 1; background: #ececec; }
        .end { width: 4px; color: #fff; font-size: 5px; line-height: 5px; }
      </style>
      <div class="in"><slot></slot></div><div class="end">×</div>
    `;
  }
}
customElements.define('float-bar', FloatBar);

class NetMeter extends HTMLElement {
  constructor() {
    super();
    this.shadowDOM = this.attachShadow({ mode: 'open' });
  }

  connectedCallback() {
    this.shadowDOM.innerHTML = `
      <style>
        :host { display: flex; align-items: center; gap: 4px; padding: 3px; width: 57px; height: 21px; border-radius: 14px; background: #fff; color: #777; box-shadow: 0 1px 3px #333; }
        svg { flex: none; width: 21px; height: 21px; }
        dl { display: grid; grid-template-columns: 6px auto; gap: 0 2px; margin: 0; line-height: 10px; font-size: 6px; white-space: nowrap; }
        dt { color: #2bc275; }
        dt:first-child { color: #dd7b33; }
        dd { margin: 0; }
      </style>
      <svg viewBox="0 0 21 21">
        <circle cx="10.500" cy="10.500" r="10.500" fill="#27c673"/>
        <g fill="none" stroke="#fff" stroke-width="1.500"><path d="M3.500 9a10 10 0 0 1 14 0M5.500 11.500a7 7 0 0 1 10 0M7.500 13.500a4.500 4.500 0 0 1 6 0"/></g>
        <circle cx="10.500" cy="15.500" r="1.300" fill="#fff"/>
      </svg>
      <dl><dt>⇅</dt><dd>0.00K/s</dd><dt>▣</dt><dd>0</dd></dl>
    `;
  }
}
customElements.define('net-meter', NetMeter);

class SiteBadge extends HTMLElement {
  constructor() {
    super();
    this.shadowDOM = this.attachShadow({ mode: 'open' });
  }

  connectedCallback() {
    this.shadowDOM.innerHTML = `
      <style>
        :host { display: flex; align-items: center; box-sizing: border-box; gap: 13px; padding-left: 14px; width: 180px; height: 85px; background: #223056; color: #d3d6df; }
        svg { flex: none; width: 35px; height: 36px; fill: none; stroke: currentColor; stroke-linecap: round; stroke-linejoin: round; }
        strong { display: block; font: bold 26px/30px "Liberation Sans", "Noto Sans CJK SC", sans-serif; }
        span { display: block; font: 12px/14px "DejaVu Sans", sans-serif; }
      </style>
      <svg viewBox="0 0 35 36">
        <path stroke-width="2.500" d="M8 27V6c0-4 3-5 6-3l16 10c4 3 4 6 0 8L14 32c-8 5-12 4-12-3V6"/>
        <path stroke-width="2.500" d="M8 27c0 2 2 3 4 2"/>
        <path fill="currentColor" stroke="none" d="M14 12l8 5-8 5z"/>
        <path stroke-width="1.500" d="M24 13v8"/>
      </svg>
      <div><strong>溜溜自学</strong><span>zixue.3D66.COM</span></div>
    `;
  }
}
customElements.define('site-badge', SiteBadge);

class CadApp extends HTMLElement {
  constructor() {
    super();
    this.shadowDOM = this.attachShadow({ mode: 'open' });
  }

  connectedCallback() {
    this.shadowDOM.innerHTML = `
      <style>
        :host {
          display: flex; flex-direction: column; position: relative; box-sizing: border-box; height: 100%;
          padding: 5px 5px 2px; background: linear-gradient(90deg, #2b8bdc, #1d66bb 10px, #1a5cb2 60%, #16509f);
        }
        cad-workspace { flex: 1; }
        .layers { position: absolute; left: 53px; top: 90px; height: 9px; }
        .layers cad-strip { --cell: 12px; }
        .find { position: absolute; left: 105px; top: 104px; width: 108px; height: 12px; }
        .find input { flex: 1; min-width: 0; padding: 0 3px; border: 0; background: #fff; font: inherit; }
        .find cad-tool { width: 14px; background: #fff; }
        .ucs { position: absolute; left: 105px; top: 118px; height: 10px; }
        .ucs cad-strip { --cell: 12px; }
        net-meter { position: absolute; right: 61px; top: 125px; }
        .dots { position: absolute; right: 129px; bottom: 92px; display: flex; gap: 4px; }
        .dots i { width: 12px; height: 14px; border-radius: 50%; background: #aaa; }
        .speed { position: absolute; right: 11px; bottom: 55px; display: flex; align-items: center; justify-content: flex-end; gap: 4px; width: 56px; height: 21px; padding-right: 3px; box-sizing: border-box; border-left: 17px solid #1c9a60; border-radius: 10px; background: #eee; font-size: 5px; line-height: 8px; }
        .speed span:first-child { margin-right: auto; padding-left: 3px; color: #d44; }
        .speed b { width: 11px; height: 11px; border-radius: 50%; background: #2e83d8; color: #fff; font-size: 9px; line-height: 10px; text-align: center; }
        site-badge { position: absolute; right: 55px; bottom: 14px; }
      </style>
      <cad-header></cad-header>
      <cad-ribbon></cad-ribbon>
      <cad-toolbars></cad-toolbars>
      <cad-workspace></cad-workspace>
      <cad-footer></cad-footer>
      <float-bar class="layers"><cad-strip icons="measure layerb | calc dimang"></cad-strip></float-bar>
      <float-bar class="find"><input type="text" aria-label="查找文字" placeholder="输入文字"><cad-tool icon="zoom"></cad-tool></float-bar>
      <float-bar class="ucs"><cad-strip icons="table ball ballg ballr dimrad | cube cubex"></cad-strip></float-bar>
      <net-meter></net-meter>
      <div class="dots"><i></i><i></i></div>
      <div class="speed"><span>↑<br>↓</span><span>0K/s<br>0K/s</span><b>+</b></div>
      <site-badge></site-badge>
    `;
  }
}
customElements.define('cad-app', CadApp);
</script>
</body>
</html>
